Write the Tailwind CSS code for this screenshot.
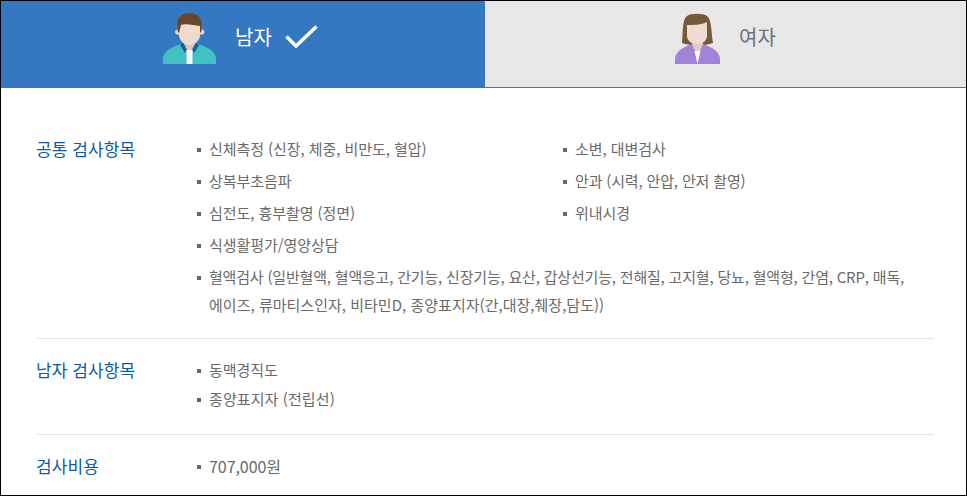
<!DOCTYPE html>
<html lang="ko">
<head>
  <meta charset="UTF-8" />
  <title>검사항목</title>
  <script src="https://cdn.jsdelivr.net/npm/@tailwindcss/browser@4"></script>
</head>
<body class="bg-white">
<div class="w-[967px] h-[496px] overflow-hidden border border-black font-['Noto_Sans_CJK_KR','Noto_Sans',sans-serif]">

  <!-- tabs -->
  <div class="flex h-[87px]">
    <div class="w-[484px] bg-[#3478c1] flex items-start text-white">
      <svg class="ml-[162px] mt-[11px] w-[54px] h-[52px]" viewBox="0 0 54 52">
        <path d="M0 52V47C0 39 9 35 18 32H35C44 35 53 39 53 47V52Z" fill="#41c1c1"/>
        <path d="M18 32L21 28H32L35 32L30 40H23Z" fill="#e3c3b3"/>
        <path d="M17 33L20 30L24 38L22 41Z M36 33L33 30L29 38L31 41Z" fill="#0f5fae"/>
        <rect x="23.500" y="38" width="6" height="14" fill="#f6f8fa"/>
        <circle cx="15" cy="20" r="2.800" fill="#ecd5ca"/>
        <circle cx="38.500" cy="20" r="2.800" fill="#ecd5ca"/>
        <path d="M16 12H37V23C37 29 31 33 26.500 33C22 33 16 29 16 23Z" fill="#efdad0"/>
        <path d="M14.500 19V9C15.500 4 21 1 26.500 1C32 1 37.500 4 38.500 9V19L37 21V14C31 13 22 11 18 13L16 21Z" fill="#6b4628"/>
      </svg>
      <span class="ml-[18px] mt-[21px] text-[20px] leading-[30px]">남자</span>
      <svg class="ml-[13px] mt-[24px] w-[33px] h-[24px]" viewBox="0 0 33 24" fill="none" stroke="#fff" stroke-width="3.500">
        <path d="M1.500 11.500L11 21L31.500 1.500"/>
      </svg>
    </div>
    <div class="flex-1 bg-[#e7e7e7] border-b border-[#3478c1] flex items-start text-[#6b7280]">
      <svg class="ml-[190px] mt-[11px] w-[46px] h-[52px]" viewBox="0 0 46 52">
        <path d="M7 31C8 20 7 8 12 4C16 1 28 1 32 4C37 8 36 20 38 31C30 34 15 34 7 31Z" fill="#765a38"/>
        <path d="M0 52V47C0 40 8 35 17 32H28C37 35 45 40 45 47V52Z" fill="#a183d8"/>
        <path d="M17 32V28H28V32L23 44H22Z" fill="#e6c9bc"/>
        <path d="M19.500 39H25.500L22.500 52Z" fill="#fff"/>
        <path d="M12 13C19 13 26 13 32 10V24C32 29 27 32 22 32C17 32 12 29 12 24Z" fill="#eedcd3"/>
      </svg>
      <span class="ml-[18px] mt-[21px] text-[20px] leading-[30px]">여자</span>
    </div>
  </div>

  <!-- content -->
  <div class="pl-[35px] pr-[32px] text-[15px] tracking-[-0.06px] text-[#6a6a6a]">

    <div class="flex pt-[45px] pb-[19px] border-b border-[#e5e5e5]">
      <h3 class="w-[161px] text-[#0b5aa8] text-[17px] tracking-[0.1px] leading-[32px] font-normal">공통 검사항목</h3>
      <div class="flex-1">
        <ul class="grid grid-cols-[366px_1fr]">
          <li class="flex leading-[32px]"><i class="mt-[15px] mr-[8px] w-[4px] h-[4px] bg-[#666]"></i>신체측정 (신장, 체중, 비만도, 혈압)</li>
          <li class="flex leading-[32px]"><i class="mt-[15px] mr-[8px] w-[4px] h-[4px] bg-[#666]"></i>소변, 대변검사</li>
          <li class="flex leading-[32px]"><i class="mt-[15px] mr-[8px] w-[4px] h-[4px] bg-[#666]"></i>상복부초음파</li>
          <li class="flex leading-[32px] tracking-[-0.16px]"><i class="mt-[15px] mr-[8px] w-[4px] h-[4px] bg-[#666]"></i>안과 (시력, 안압, 안저 촬영)</li>
          <li class="flex leading-[32px]"><i class="mt-[15px] mr-[8px] w-[4px] h-[4px] bg-[#666]"></i>심전도, 흉부촬영 (정면)</li>
          <li class="flex leading-[32px]"><i class="mt-[15px] mr-[8px] w-[4px] h-[4px] bg-[#666]"></i>위내시경</li>
          <li class="col-span-2 flex leading-[32px]"><i class="mt-[15px] mr-[8px] w-[4px] h-[4px] bg-[#666]"></i>식생활평가/영양상담</li>
          <li class="col-span-2 flex leading-[28px] pt-[2px]"><i class="mt-[13px] mr-[8px] w-[4px] h-[4px] shrink-0 bg-[#666]"></i><span><span class="tracking-[-0.19px]">혈액검사 (일반혈액, 혈액응고, 간기능, 신장기능, 요산, 갑상선기능, 전해질, 고지혈, 당뇨, 혈액형, 간염, CRP, 매독,</span><br><span class="tracking-[0.02px]">에이즈, 류마티스인자, 비타민D, 종양표지자(간,대장,췌장,담도))</span></span></li>
        </ul>
      </div>
    </div>

    <div class="flex pt-[16px] pb-[21px] border-b border-[#e5e5e5]">
      <h3 class="w-[161px] text-[#0b5aa8] text-[17px] tracking-[0.1px] leading-[30px] font-normal">남자 검사항목</h3>
      <ul class="flex-1">
        <li class="flex leading-[29px]"><i class="mt-[14px] mr-[8px] w-[4px] h-[4px] bg-[#666]"></i>동맥경직도</li>
        <li class="flex leading-[29px] tracking-[0.1px]"><i class="mt-[14px] mr-[8px] w-[4px] h-[4px] bg-[#666]"></i>종양표지자 (전립선)</li>
      </ul>
    </div>

    <div class="flex pt-[16px]">
      <h3 class="w-[161px] text-[#0b5aa8] text-[17px] tracking-[0.1px] leading-[30px] font-normal">검사비용</h3>
      <ul class="flex-1">
        <li class="flex leading-[30px] text-[16px]"><i class="mt-[14px] mr-[8px] w-[4px] h-[4px] bg-[#666]"></i>707,000원</li>
      </ul>
    </div>
  </div>
</div>
</body>
</html>
